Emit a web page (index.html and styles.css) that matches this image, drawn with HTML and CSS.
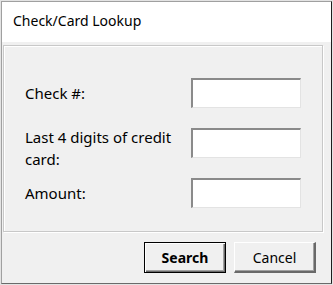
FILE: index.html
```html
<!DOCTYPE html>
<html lang="en">
<head>
    <meta charset="UTF-8">
    <title>Check/Card Lookup</title>
    <link rel="stylesheet" href="styles.css">
</head>
<body>
    <div class="frame">
        <div class="window">
            <div class="title-bar">Check/Card Lookup</div>
            <div class="client">
                <div class="group">
                    <label class="field-label" for="check-no">Check #:</label>
                    <input class="field" id="check-no" type="text">

                    <label class="field-label" for="card-last4">Last 4 digits of credit card:</label>
                    <input class="field" id="card-last4" type="text">

                    <label class="field-label" for="amount">Amount:</label>
                    <input class="field" id="amount" type="text">
                </div>
                <div class="buttons">
                    <button class="btn btn-default">Search</button>
                    <button class="btn">Cancel</button>
                </div>
            </div>
        </div>
    </div>
</body>
</html>
```

FILE: styles.css
```css
/* Reset */
* {
    margin: 0;
    padding: 0;
    box-sizing: border-box;
}

body {
    font-family: "Noto Sans", "Open Sans", sans-serif;
    color: #000;
    background: #f0f0f0;
}

/* Outer window frame */
.frame {
    width: 333px;
    height: 285px;
    border: 1px solid #e3e3e3;
}

.window {
    height: 100%;
    display: flex;
    flex-direction: column;
    border-style: solid;
    border-width: 1px;
    border-color: #a0a0a0 #1e1e1e #6a6a6a #a0a0a0;
    background: #f0f0f0;
}

.title-bar {
    height: 40px;
    background: #fff;
    padding: 9px 0 0 11px;
    font-size: 14px;
    line-height: 20px;
}

.client {
    flex: 1;
    display: flex;
    flex-direction: column;
    padding: 3px 8px 0 1px;
}

/* Etched group box */
.group {
    height: 187px;
    border: 1px solid #c8c8c8;
    box-shadow: inset 1px 1px 0 #fff, 1px 1px 0 #fff;
    display: grid;
    grid-template-columns: 166px 110px;
    grid-auto-rows: 30px;
    row-gap: 20px;
    padding: 32px 0 0 21px;
}

.field-label {
    font-size: 15px;
    line-height: 22px;
    align-self: center;
}

.field-label[for="card-last4"] {
    align-self: start;
    margin-top: -2px;
    padding-right: 6px;
}

/* Sunken text box */
.field {
    width: 110px;
    height: 30px;
    background: #fff;
    border-style: solid;
    border-width: 2px 1px 1px 2px;
    border-color: #8a8a8a #e3e3e3 #e3e3e3 #8a8a8a;
    outline: none;
}

.buttons {
    display: flex;
    justify-content: flex-end;
    gap: 8px;
    padding: 10px 7px 0 0;
}

/* Raised push button */
.btn {
    width: 82px;
    height: 31px;
    font-family: inherit;
    font-size: 14px;
    color: #000;
    background: #f0f0f0;
    border-style: solid;
    border-width: 1px 2px 2px 1px;
    border-color: #fff #696969 #696969 #fff;
    box-shadow: inset -1px -1px 0 #a0a0a0;
}

.btn-default {
    font-weight: bold;
    border: 1px solid #000;
    box-shadow: inset 1px 1px 0 #fff, inset -1px -1px 0 #696969, inset -2px -2px 0 #a0a0a0;
}
```
